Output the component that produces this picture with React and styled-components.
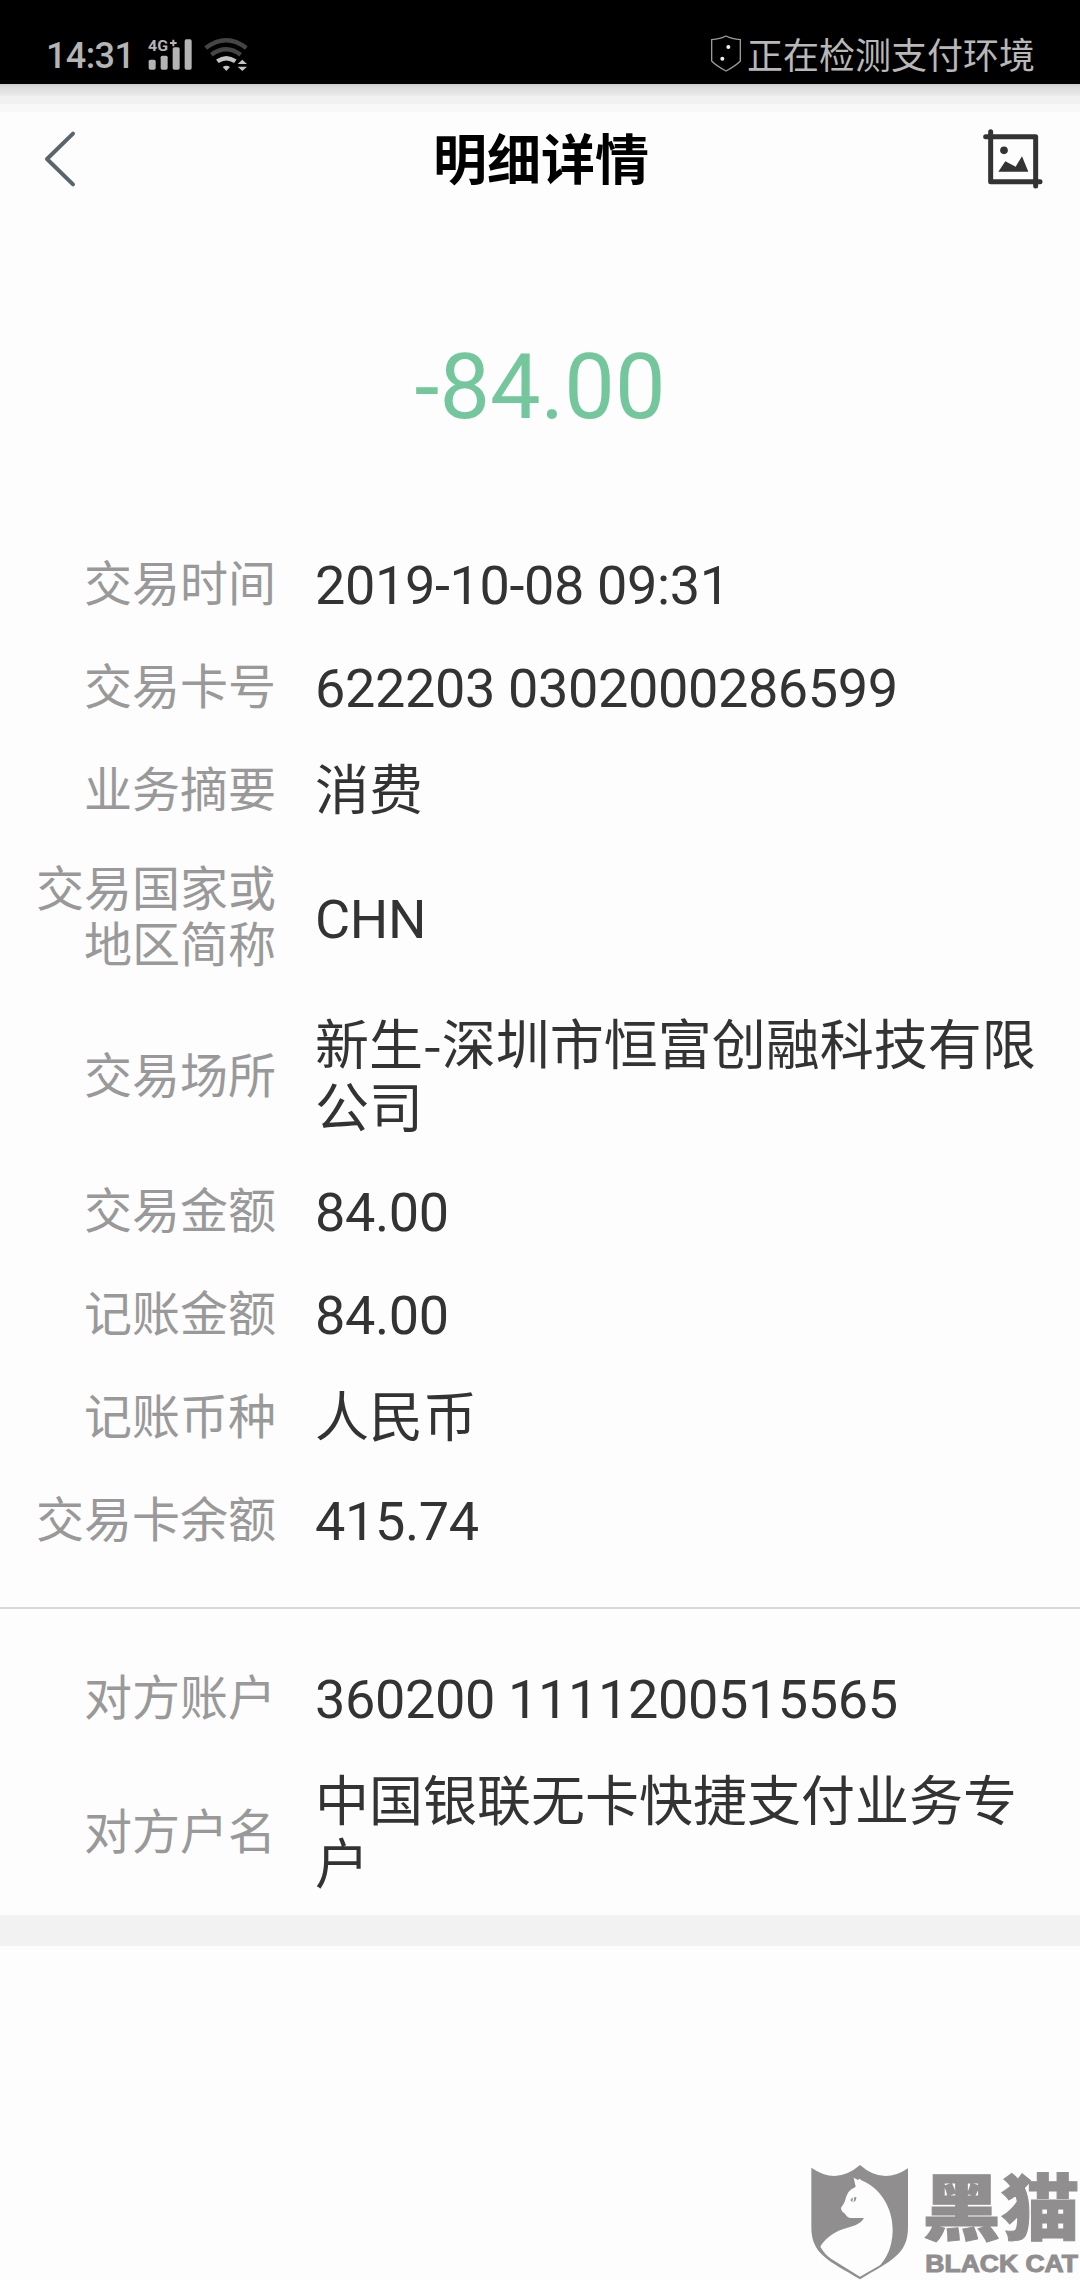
import React from "react"
import styled, { createGlobalStyle } from "styled-components"

const transaction = [
  { label: ["交易时间"], value: "2019-10-08 09:31", numeric: true },
  { label: ["交易卡号"], value: "622203 0302000286599", numeric: true },
  { label: ["业务摘要"], value: "消费" },
  { label: ["交易国家或", "地区简称"], value: "CHN", numeric: true },
  { label: ["交易场所"], value: "新生-深圳市恒富创融科技有限公司" },
  { label: ["交易金额"], value: "84.00", numeric: true },
  { label: ["记账金额"], value: "84.00", numeric: true },
  { label: ["记账币种"], value: "人民币" },
  { label: ["交易卡余额"], value: "415.74", numeric: true },
]

const counterparty = [
  { label: ["对方账户"], value: "360200 1111200515565", numeric: true },
  { label: ["对方户名"], value: "中国银联无卡快捷支付业务专户" },
]

const SignalIcon = () => (
  <svg width="46" height="36" viewBox="0 0 138 108">
    <text x="0" y="49" fontFamily="Roboto" fontWeight="700" fontSize="46" fill="#b4b4b4" textLength="60" lengthAdjust="spacingAndGlyphs">4G</text>
    <path d="M66 24h20M76 14v20" stroke="#b4b4b4" strokeWidth="6" />
    <g fill="#b4b4b4">
      <rect x="2" y="74" width="21" height="30" rx="5" />
      <rect x="38" y="62" width="21" height="42" rx="5" />
      <rect x="74" y="37" width="21" height="67" rx="5" />
      <rect x="110" y="13" width="21" height="91" rx="5" />
    </g>
  </svg>
)

const WifiIcon = () => (
  <svg width="44" height="36" viewBox="0 0 132 108">
    <g fill="none" strokeWidth="13">
      <path d="M5 39Q67 -8 127 39" stroke="#454545" />
      <path d="M22 59Q67 26 110 59" stroke="#454545" />
      <path d="M40 79Q67 60 94 79" stroke="#c4c4c4" />
    </g>
    <g fill="#c4c4c4">
      <path d="M56 96Q67 89 78 96L67 108z" />
      <path d="M101 87L115 74L129 87zM101 95h28L115 108z" />
    </g>
  </svg>
)

const ShieldIcon = () => (
  <svg width="30" height="38" viewBox="0 0 90 114">
    <path d="M2 14Q28 12 45 3Q62 12 88 14V78Q75 92 45 108Q15 92 2 78z" fill="none" stroke="#9a9a9a" strokeWidth="4" />
    <circle cx="52" cy="36" r="6" fill="#f2f2f2" />
    <circle cx="34" cy="71" r="6" fill="#f2f2f2" />
  </svg>
)

const BackIcon = () => (
  <svg width="32" height="58" viewBox="0 0 96 174">
    <path d="M87 11L9 87L87 163" fill="none" stroke="#59656d" strokeWidth="12" strokeLinecap="round" strokeLinejoin="round" />
  </svg>
)

const SnapshotIcon = () => (
  <svg width="60" height="60" viewBox="0 0 180 180">
    <g fill="none" stroke="#333" strokeWidth="15" strokeLinecap="round" strokeLinejoin="round">
      <path d="M8 23H158V171" />
      <path d="M23 8V158H171" />
    </g>
    <g fill="#333">
      <circle cx="63" cy="64" r="11.5" />
      <path d="M46 128L67 97L98 113L117 82L136 128z" />
    </g>
  </svg>
)

const BlackCatLogo = () => (
  <svg width="290" height="140" viewBox="0 0 870 420">
    <path
      d="M64 83Q140 136 210 75Q279 136 354 85V262C354 344 302 363 210 418C118 363 64 344 64 262z"
      fill="#918e8f"
    />
    <path
      d="M191 113L204 120L209 116L214 121C268 142 309 202 308 271C307 325 288 356 270 376L210 410L123 356Q104 343 91 320C103 300 124 280 158 268C184 259 212 255 222 234H180C169 232 168 221 158 216Q152 208 153 203C168 186 165 175 172 163C178 149 188 146 197 140z"
      fill="#fdfdfd"
    />
    <path d="M181 181Q186 171 199 171Q199 186 188 187z" fill="#918e8f" />
    <path d="M191 172L189 186" stroke="#fdfdfd" strokeWidth="4" />
    <g fill="#918e8f">
      <text x="397" y="283" fontFamily="Noto Sans CJK SC" fontWeight="900" fontSize="214" stroke="#918e8f" strokeWidth="3" textLength="472" lengthAdjust="spacingAndGlyphs">黑猫</text>
      <text x="406" y="397" fontFamily="Liberation Sans" fontWeight="700" fontSize="69" stroke="#918e8f" strokeWidth="3" textLength="458" lengthAdjust="spacingAndGlyphs">BLACK CAT</text>
    </g>
  </svg>
)

const Details = ({ items }) => (
  <>
    {items.map(({ label, value, numeric }) => (
      <Row key={label[0]}>
        <Label>
          {label.map((line) => (
            <span key={line}>{line}</span>
          ))}
        </Label>
        <Value $numeric={numeric}>{value}</Value>
      </Row>
    ))}
  </>
)

const App = () => {
  return (
    <>
      <GlobalStyle />
      <Screen>
        <StatusBar>
          <Clock>14:31</Clock>
          <SignalIcon />
          <WifiIcon />
          <Notice>
            <ShieldIcon />
            <span>正在检测支付环境</span>
          </Notice>
        </StatusBar>
        <Shadow />
        <Header>
          <BackIcon />
          <h1>明细详情</h1>
          <SnapshotIcon />
        </Header>
        <Amount>-84.00</Amount>
        <Section>
          <Details items={transaction} />
        </Section>
        <CounterSection>
          <Details items={counterparty} />
        </CounterSection>
        <Band />
        <Watermark>
          <BlackCatLogo />
        </Watermark>
      </Screen>
    </>
  )
}

const GlobalStyle = createGlobalStyle`
  * {
    margin: 0;
    padding: 0;
    box-sizing: border-box;
  }

  body {
    background: #fdfdfd;
    font-family: Roboto, "Noto Sans CJK SC", sans-serif;
  }

  svg {
    display: block;
    flex: none;
  }
`

const Screen = styled.div`
  position: relative;
  width: 1080px;
  height: 2280px;
  overflow: hidden;
  background: #fdfdfd;
`

const StatusBar = styled.div`
  display: flex;
  align-items: flex-start;
  height: 84px;
  padding: 35px 45px 0 46px;
  background: #000;
  color: #b4b4b4;

  svg + svg {
    margin-left: 10px;
  }
`

const Clock = styled.span`
  width: 102px;
  font-size: 36px;
  font-weight: 500;
  line-height: 42px;
  letter-spacing: -0.6px;
`

const Notice = styled.div`
  display: flex;
  align-items: flex-start;
  margin-left: auto;
  gap: 6px;

  span {
    font-family: "Noto Sans CJK SC", sans-serif;
    font-size: 36px;
    line-height: 36px;
    color: #b8b8b8;
  }
`

const Shadow = styled.div`
  height: 28px;
  background: linear-gradient(
    #ccc 0,
    #dadada 3px,
    #ececec 12px,
    #f1f1f1 12px,
    #f1f1f1 20px,
    #f8f8f8 20px
  );
`

const Header = styled.div`
  display: flex;
  align-items: center;
  justify-content: space-between;
  height: 94px;
  padding: 0 37px 0 44px;

  h1 {
    margin-left: 23px;
    padding-bottom: 5px;
    font-family: "Noto Sans CJK SC", sans-serif;
    font-size: 54px;
    font-weight: 700;
    line-height: 80px;
    color: #000;
  }
`

const Amount = styled.div`
  height: 328px;
  padding-top: 129px;
  font-size: 90px;
  line-height: 106px;
  text-align: center;
  color: #74c79c;
`

const Section = styled.div`
  padding-bottom: 34px;
`

const Row = styled.div`
  display: flex;
  align-items: center;
  padding: 20px 30px 20px 0;
`

const CounterSection = styled.div`
  border-top: 2px solid #d9d9d9;
  padding-top: 39px;

  ${Row}:last-child {
    padding-bottom: 18px;
  }
`

const Label = styled.div`
  display: flex;
  flex: none;
  flex-direction: column;
  width: 276px;
  margin: -1px 39px 1px 0;
  font-size: 48px;
  line-height: 56px;
  text-align: right;
  color: #999;
`

// the CJK face sits lower in its line box than Roboto, so those values are lifted
const Value = styled.div`
  flex: 1;
  margin: ${(props) => (props.$numeric ? "0" : "-5px 0 5px")};
  font-family: ${(props) =>
    props.$numeric
      ? `Roboto, sans-serif`
      : `"Noto Sans CJK SC", sans-serif`};
  font-size: 54px;
  line-height: 63px;
  letter-spacing: ${(props) => (props.$numeric ? "-0.36px" : "normal")};
  color: #333;
`

const Band = styled.div`
  height: 31px;
  background: #f2f2f2;
`

const Watermark = styled.div`
  position: absolute;
  right: 0;
  bottom: 0;
`

export default App
